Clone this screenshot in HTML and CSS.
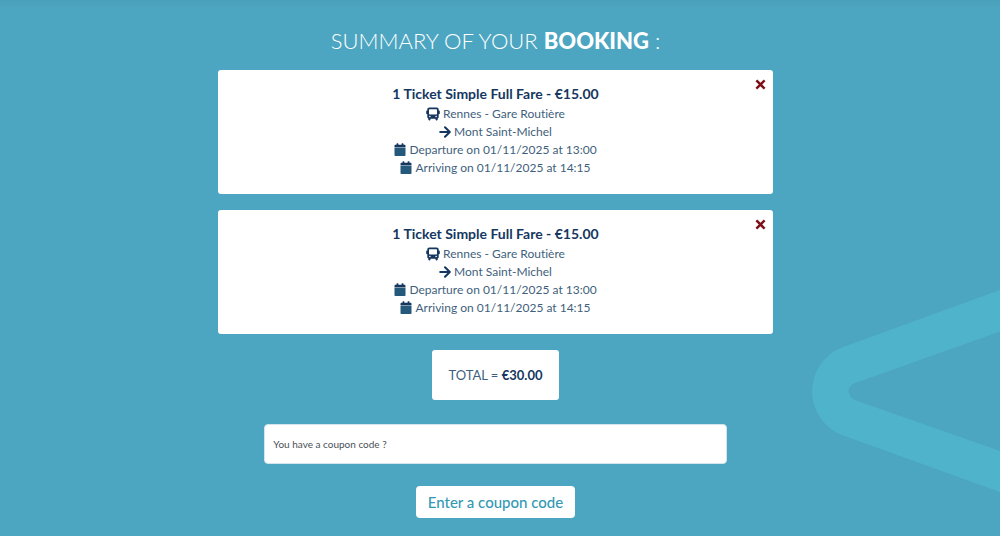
FILE: index.html
```html
<!DOCTYPE html>
<html lang="en">
<head>
<meta charset="utf-8">
<meta name="viewport" content="width=device-width, initial-scale=1">
<title>Summary of your booking</title>
<link rel="stylesheet" href="styles.css">
</head>
<body>
<svg class="symbols" aria-hidden="true">
  <symbol id="bus" viewBox="0 0 14 14">
    <path fill-rule="evenodd" d="M3.4 0.5h7.2C12 .5 12.7 1.3 12.7 2.5v1h.3c.5 0 .8.3.8.8v2.2c0 .5-.3.8-.8.8h-.3v3c0 .6-.4 1.100-1 1.300v1c0 .5-.3.8-.8.8h-.6c-.5 0-.8-.3-.8-.8v-.9h-5v.9c0 .5-.3.8-.8.8h-.6c-.5 0-.8-.3-.8-.8v-1c-.6-.2-1-.7-1-1.300v-3H1c-.5 0-.8-.3-.8-.8V4.300c0-.5.3-.8.8-.8h.3v-1C1.300 1.300 2 .5 3.400.5zM3.600 2.200c-.4 0-.6.2-.6.6v4c0 .4.2.6.6.6h6.800c.4 0 .6-.2.6-.6v-4c0-.4-.2-.6-.6-.6zM3.900 8.700a.8.8 0 1 0 0 1.600.8.8 0 0 0 0-1.600zM10.100 8.700a.8.8 0 1 0 0 1.600.8.8 0 0 0 0-1.600z"/>
  </symbol>
  <symbol id="arrow" viewBox="0 0 12 14">
    <path d="M1.200 7H10.400M6 2.200 10.800 7 6 11.800" fill="none" stroke="currentColor" stroke-width="2" stroke-linecap="round" stroke-linejoin="round"/>
  </symbol>
  <symbol id="calendar" viewBox="0 0 12 14">
    <path class="calendar-top" d="M.5 4.400V3c0-.7.5-1.200 1.200-1.200H2.500V.9c0-.4.200-.6.6-.6h.7c.4 0 .6.200.6.600v.9h3.200V.9c0-.4.200-.6.6-.6h.7c.4 0 .6.200.6.600v.9h.8c.7 0 1.200.5 1.200 1.200v1.400z"/>
    <path d="M.5 5h11v7.200c0 .6-.3.800-.8.800H1.300C.8 13 .5 12.800.5 12.200z"/>
  </symbol>
  <symbol id="cross" viewBox="0 0 10 10">
    <path d="M2 2 8 8M8 2 2 8" stroke="currentColor" stroke-width="2.200" stroke-linecap="square"/>
  </symbol>
</svg>
<svg class="chevron" viewBox="0 0 190 204" aria-hidden="true">
  <path d="M190 0V41.500L48 92Q39 94 38.500 101Q39 108 46 110.500L190 161V202L32 145A47 47 0 0 1 32 57.500Z"/>
</svg>
<main class="summary">
  <h1 class="title">SUMMARY OF YOUR <strong>BOOKING</strong> :</h1>
  <article class="ticket">
    <button class="remove" type="button" aria-label="Remove ticket"><svg><use href="#cross"/></svg></button>
    <h2 class="fare">1 Ticket Simple Full Fare - €15.00</h2>
    <p class="line"><svg class="icon icon-bus"><use href="#bus"/></svg>Rennes - Gare Routière</p>
    <p class="line"><svg class="icon"><use href="#arrow"/></svg>Mont Saint-Michel</p>
    <p class="line"><svg class="icon icon-calendar"><use href="#calendar"/></svg>Departure on 01/11/2025 at 13:00</p>
    <p class="line"><svg class="icon icon-calendar"><use href="#calendar"/></svg>Arriving on 01/11/2025 at 14:15</p>
  </article>
  <article class="ticket">
    <button class="remove" type="button" aria-label="Remove ticket"><svg><use href="#cross"/></svg></button>
    <h2 class="fare">1 Ticket Simple Full Fare - €15.00</h2>
    <p class="line"><svg class="icon icon-bus"><use href="#bus"/></svg>Rennes - Gare Routière</p>
    <p class="line"><svg class="icon"><use href="#arrow"/></svg>Mont Saint-Michel</p>
    <p class="line"><svg class="icon icon-calendar"><use href="#calendar"/></svg>Departure on 01/11/2025 at 13:00</p>
    <p class="line"><svg class="icon icon-calendar"><use href="#calendar"/></svg>Arriving on 01/11/2025 at 14:15</p>
  </article>
  <p class="total">TOTAL = <strong>€30.00</strong></p>
  <form class="coupon">
    <input class="coupon-input" type="text" aria-label="Coupon code" placeholder="You have a coupon code ?">
    <button class="coupon-button" type="button">Enter a coupon code</button>
  </form>
</main>
</body>
</html>
```
FILE: styles.css
```css
* {
  box-sizing: border-box;
}

body {
  position: relative;
  margin: 0;
  min-height: 100vh;
  overflow-x: hidden;
  background: linear-gradient(#489fb9, #4da6c1 8px);
  color: #3f5f7d;
  font: 12px/18px Lato, sans-serif;
  font-variant-ligatures: none;
}

.symbols {
  position: absolute;
  width: 0;
  height: 0;
}

.chevron {
  position: absolute;
  top: 290px;
  right: 0;
  width: 190px;
  height: 204px;
  fill: #50b3cc;
}

.summary {
  position: relative;
  display: flex;
  flex-direction: column;
  align-items: center;
  padding: 26px 9px 18px 0;
}

.title {
  margin: 0 0 14px;
  color: #fff;
  font-size: 22px;
  font-weight: 300;
  line-height: 30px;
}

.title strong {
  font-weight: 900;
}

.ticket {
  position: relative;
  width: 56%;
  margin-bottom: 16px;
  padding: 14px 16px 17px;
  border-radius: 3px;
  background: #fff;
  text-align: center;
}

.fare {
  margin: 0 0 2px;
  color: #15375f;
  font-size: 14px;
  font-weight: 700;
  line-height: 19px;
}

.line {
  display: flex;
  align-items: center;
  justify-content: center;
  gap: 3px;
  margin: 0;
}

.icon {
  width: 12px;
  height: 14px;
  color: #15375f;
  fill: #15375f;
}

.icon-bus {
  width: 14px;
}

.icon-calendar {
  fill: #24597b;
}

.calendar-top {
  fill: #15375f;
}

.remove {
  position: absolute;
  top: 9px;
  right: 7px;
  display: flex;
  padding: 0;
  border: 0;
  background: none;
  color: #7c1018;
  cursor: pointer;
}

.remove svg {
  width: 11px;
  height: 11px;
}

.total {
  margin: 0 0 24px;
  padding: 16px;
  border-radius: 3px;
  background: #fff;
  font-size: 13px;
}

.total strong {
  color: #15375f;
  font-weight: 700;
}

.coupon {
  display: flex;
  flex-direction: column;
  align-items: center;
  gap: 22px;
  width: 56%;
}

.coupon-input {
  width: 83.333%;
  height: 40px;
  padding: 0 8px;
  border: 1px solid #d5e4ea;
  border-radius: 4px;
  background: #fff;
  color: #495057;
  font: 10px/16px Lato, sans-serif;
}

.coupon-input::placeholder {
  color: #495057;
  opacity: 1;
}

.coupon-button {
  padding: 6px 12px;
  border: 0;
  border-radius: 4px;
  background: #fff;
  color: #3499b3;
  font: 500 15px/20px Lato, sans-serif;
  cursor: pointer;
}
```
